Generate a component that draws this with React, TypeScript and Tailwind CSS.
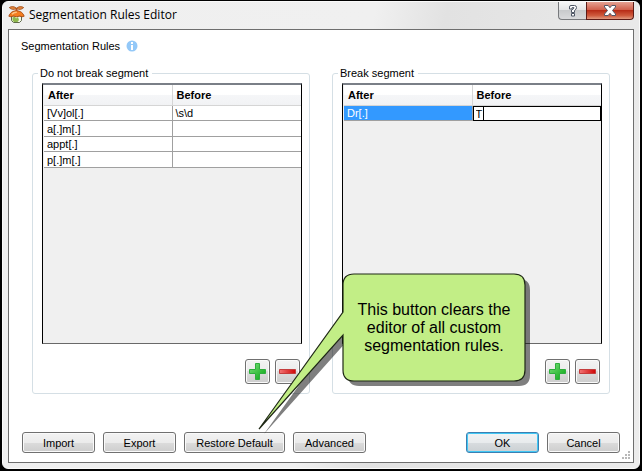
import React from "react";

type Rule = { after: string; before: string };

function AppIcon() {
  return (
    <svg width="17" height="17" viewBox="0 0 17 17" aria-hidden="true">
      <path d="M3.500 10h10v4.500l-2 2h-6l-2-2z" fill="#f4f6ea" stroke="#5f6b48" strokeWidth="1" />
      <path d="M4.500 11.500l2.500-1 1 2 2-1.500 1 3-1.500 2H6l-1.500-1.500z" fill="#8fb84e" />
      <path d="M.8 10.200C2 6.500 5 4.800 8.500 4.800s6.500 1.700 7.700 5.400l-2.200.6-2.500-.8-3 .8-3-.8-2.500.8z" fill="#f47d20" stroke="#a84c12" strokeWidth=".9" />
      <path d="M4 8.300c1.300-1.700 3-2.200 4.800-2.100" stroke="#ffc383" strokeWidth="1.400" fill="none" />
      <path d="M7.500 5V2h2v3z" fill="#b8501a" />
      <path d="M8.500 2.300C6.500.2 3 .2 1.300 1.600 3 3.700 6.500 4 8.500 2.300 10.500.2 14 .2 15.700 1.600 14 3.700 10.500 4 8.500 2.300z" fill="#e8883c" stroke="#9a4a18" strokeWidth=".8" />
    </svg>
  );
}

function InfoIcon() {
  return (
    <svg width="12" height="12" viewBox="0 0 12 12" aria-hidden="true">
      <circle cx="6" cy="6" r="5.500" fill="#93c8f8" />
      <path d="M5 2h2v2H5zM5 5h2v5H5z" fill="#fff" />
    </svg>
  );
}

function PlusIcon() {
  return (
    <svg width="17" height="17" viewBox="0 0 17 17" aria-hidden="true">
      <defs>
        <linearGradient id="plus" x1="0" y1="0" x2="1" y2="1">
          <stop offset="0" stopColor="#7be07b" />
          <stop offset="1" stopColor="#06a512" />
        </linearGradient>
      </defs>
      <path d="M6.500 .5h4v6h6v4h-6v6h-4v-6h-6v-4h6z" fill="url(#plus)" stroke="#2eae3c" strokeWidth="1" />
    </svg>
  );
}

function MinusIcon() {
  return (
    <svg width="17" height="17" viewBox="0 0 17 17" aria-hidden="true">
      <defs>
        <linearGradient id="minus" x1="0" y1="0" x2="1" y2="0">
          <stop offset="0" stopColor="#f27474" />
          <stop offset="1" stopColor="#cf0606" />
        </linearGradient>
      </defs>
      <path d="M.5 6.500h16v4H.5z" fill="url(#minus)" stroke="#c43c3c" strokeWidth="1" />
    </svg>
  );
}

const face =
  "border border-[#707070] bg-[linear-gradient(#f3f3f3_0%,#ebebeb_50%,#dcdcdc_50%,#cdcdcd_100%)] rounded-[3px] shadow-[inset_0_0_0_1px_#fafafa]";

function IconButton({ label, children }: { label: string; children: React.ReactNode }) {
  return (
    <button aria-label={label} className={`flex size-[25px] items-center justify-center ${face}`}>
      {children}
    </button>
  );
}

function PushButton({ children, wide, primary }: { children: string; wide?: boolean; primary?: boolean }) {
  const look = primary
    ? "rounded-[3px] border border-[#3c7fb1] bg-[linear-gradient(#f1f3f4_0%,#e8ebed_50%,#d8dcdf_50%,#cbd0d3_100%)] shadow-[inset_0_0_0_1px_#41c8f5]"
    : face;
  return (
    <button className={`h-[21px] text-center leading-4 ${wide ? "w-[101px]" : "w-[73px]"} ${look}`}>{children}</button>
  );
}

function RuleGroup({ title, rules, editing }: { title: string; rules: Rule[]; editing?: boolean }) {
  return (
    <fieldset className="flex min-w-0 flex-1 flex-col rounded-[3px] border border-[#d5dfe5] pt-0.5 pr-[7px] pb-[9px] pl-[9px]">
      <legend className="-ml-1 pr-1 pl-0.5 leading-4">{title}</legend>
      <div className="min-h-0 flex-1 border-x border-t-2 border-b border-x-black border-t-[#7a7f87] border-b-[#696969] bg-[#f0f0f0] pl-px">
        <table className="w-full table-fixed border-separate border-spacing-0 text-left">
          <thead>
            <tr className="h-[21px] bg-[linear-gradient(#ffffff_0%,#ffffff_45%,#f5f6f8_50%,#f1f2f4_100%)]">
              <th className="w-1/2 border-r border-b border-[#d5d5d5] px-1 py-0 leading-4 font-bold">After</th>
              <th className="border-b border-[#d5d5d5] px-1 py-0 leading-4 font-bold">Before</th>
            </tr>
          </thead>
          <tbody>
            {rules.map((rule) => (
              <tr key={rule.after} className="bg-white odd:h-[15px] even:h-4">
                <td
                  className={`border-r border-b border-[#a0a0a0] px-[3px] py-0 leading-[14px] ${
                    editing ? "bg-[#3399ff] text-white" : ""
                  }`}
                >
                  {rule.after}
                </td>
                <td className={`p-0 leading-[14px] ${editing ? "" : "border-b border-[#a0a0a0]"}`}>
                  {editing ? (
                    <span className="flex h-[15px] items-center border border-black pl-0.5">
                      <input
                        aria-label="Before"
                        defaultValue={rule.before}
                        className="h-[13px] w-2 border-r border-black bg-white p-0 leading-3 outline-none"
                      />
                    </span>
                  ) : (
                    <span className="pl-[3px]">{rule.before}</span>
                  )}
                </td>
              </tr>
            ))}
          </tbody>
        </table>
      </div>
      <div className="mt-[15px] flex justify-end gap-[5px] pr-0.5">
        <IconButton label="Add rule">
          <PlusIcon />
        </IconButton>
        <IconButton label="Remove rule">
          <MinusIcon />
        </IconButton>
      </div>
    </fieldset>
  );
}

function Callout() {
  const bubble =
    "M12 1H172Q183 1 183 12V97Q183 108 172 108H12Q1 108 1 97V62L-83 156L1 39V12Q1 1 12 1Z";
  return (
    <div role="note" className="absolute top-[273px] left-[342px] flex h-[109px] w-[184px] items-center justify-center">
      <svg className="absolute inset-0 overflow-visible" width="184" height="109" viewBox="0 0 184 109" aria-hidden="true">
        <path d={bubble} transform="translate(5 5)" fill="#000" fillOpacity=".5" />
        <path d={bubble} fill="#c2ee86" stroke="#1f2816" strokeWidth="1.200" />
      </svg>
      <p className="relative w-[160px] text-center text-[16px] leading-[18px]">
        This button clears the editor of all custom segmentation rules.
      </p>
    </div>
  );
}

export default function App() {
  return (
    <div className="relative flex h-screen min-h-[360px] flex-col bg-black px-0.5 pt-px pb-0.5 font-['Liberation_Sans',Arial,sans-serif] text-[11px] text-black">
      <div className="flex min-h-0 flex-1 flex-col rounded-[6px] border border-[#fafafa] bg-[linear-gradient(100deg,#efefef_0%,#f0f0f0_52%,#e2e2e2_62%,#ececec_100%)] px-[5px] pb-[5px]">
        <header className="flex h-[27px] shrink-0 items-start">
          <div className="flex h-[25px] flex-1 items-center gap-1">
            <AppIcon />
            <h1 className="font-['Open_Sans','Noto_Sans',sans-serif] text-[12px] leading-4">Segmentation Rules Editor</h1>
          </div>
          <button
            aria-label="Help"
            className="flex h-[18px] w-[28px] items-center justify-center rounded-bl-[4px] border border-t-0 border-r-0 border-[#77797c] bg-[linear-gradient(#f7f7f7_0%,#e3e4e5_48%,#c8cacc_50%,#d9dadc_100%)]"
          >
            <svg width="10" height="13" viewBox="0 0 10 13" aria-hidden="true">
              <path d="M1.500 5V3Q1.500 1.500 3 1.500h3.500Q8.500 1.500 8.500 3.500T6.500 6.500V8.500h-3V6Q6 5 6 3.700H4V5zM3.500 9.500h3v2.500h-3z" fill="#fff" stroke="#4e5664" strokeWidth="1" />
            </svg>
          </button>
          <button
            aria-label="Close"
            className="flex h-[18px] w-[48px] items-center justify-center rounded-br-[4px] border border-t-0 border-[#5c1b16] bg-[linear-gradient(#e5a192_0%,#d0604c_46%,#b82d18_50%,#cf5b3e_80%,#e09a80_100%)]"
          >
            <svg width="12" height="11" viewBox="0 0 12 11" aria-hidden="true">
              <path d="M.5 .5h3.700L6 2.700 7.800 .5h3.700V2L8.500 5.500l3 3.500v1.500H7.800L6 8.300 4.200 10.500H.5V9l3-3.500L.5 2z" fill="#fff" stroke="#535666" strokeWidth="1" />
            </svg>
          </button>
        </header>

        <main className="relative flex min-h-0 flex-1 flex-col border border-[#6e6e6e] bg-white pt-[7px]">
          <div className="flex h-[18px] items-center gap-1.5 pl-3">
            <h2 className="leading-4">Segmentation Rules</h2>
            <InfoIcon />
          </div>
          <div className="mt-2.5 flex min-h-0 flex-1 gap-[22px] px-[23px]">
            <RuleGroup
              title="Do not break segment"
              rules={[
                { after: "[Vv]ol[.]", before: "\\s\\d" },
                { after: "a[.]m[.]", before: "" },
                { after: "appt[.]", before: "" },
                { after: "p[.]m[.]", before: "" },
              ]}
            />
            <RuleGroup title="Break segment" rules={[{ after: "Dr[.]", before: "T" }]} editing />
          </div>
          <footer className="mt-[38px] mb-[9px] flex gap-2 px-[13px]">
            <PushButton>Import</PushButton>
            <PushButton>Export</PushButton>
            <PushButton wide>Restore Default</PushButton>
            <PushButton>Advanced</PushButton>
            <div className="flex-1" />
            <PushButton primary>OK</PushButton>
            <PushButton>Cancel</PushButton>
          </footer>
          <svg className="absolute right-0.5 bottom-0.5" width="9" height="9" viewBox="0 0 9 9" fill="#b8b8b8" aria-hidden="true">
            <path d="M6 0h2v2H6zM3 3h2v2H3zM6 3h2v2H6zM0 6h2v2H0zM3 6h2v2H3zM6 6h2v2H6z" />
          </svg>
        </main>
      </div>
      <Callout />
    </div>
  );
}
